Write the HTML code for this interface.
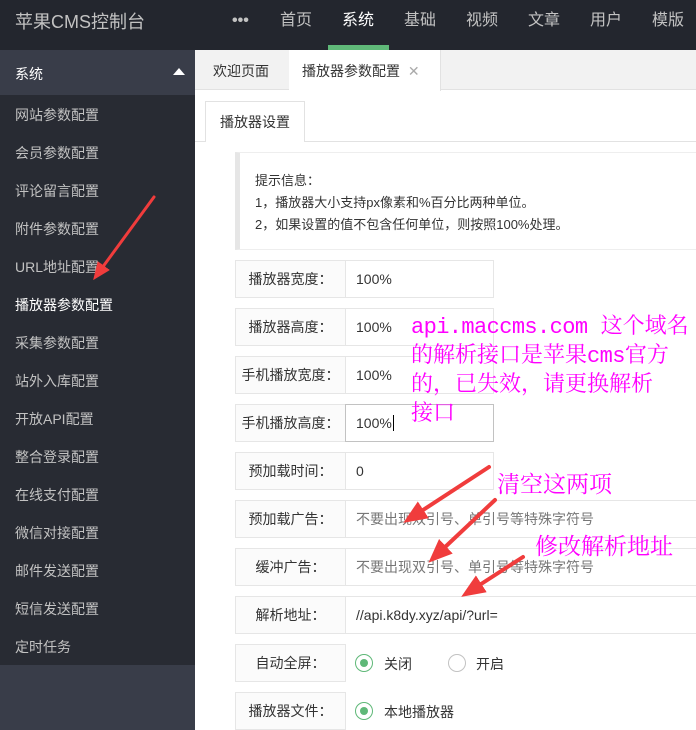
<!DOCTYPE html>
<html><head><meta charset="utf-8"><style>
*{margin:0;padding:0;box-sizing:border-box}
body{width:696px;height:730px;overflow:hidden;background:#fff;font-family:"Liberation Sans","Noto Sans CJK SC",sans-serif;position:relative;color:#333}
.hd{position:absolute;left:0;top:0;width:696px;height:50px;background:#23262e}
.logo{position:absolute;left:15px;top:0;line-height:44px;font-size:18px;color:#c2c2c2}
.nav{position:absolute;top:0;line-height:42px;font-size:16px;color:#c2c2c2}
.ul{position:absolute;left:328px;top:45px;width:61px;height:5px;background:#5fb878}
.side{position:absolute;left:0;top:50px;width:195px;height:680px;background:#393d49}
.sl{position:absolute;left:0;top:45px;width:195px;height:570px;background:#282b33}
.si{position:absolute;left:15px;font-size:14px;color:#c2c2c2}
.tabs{position:absolute;left:195px;top:50px;width:501px;height:40px;background:#f2f2f2;border-bottom:1px solid #e2e2e2}
.f{position:absolute;font-size:14px}
.lb{position:absolute;left:235px;width:111px;height:38px;border:1px solid #e6e6e6;background:#fbfbfb;font-size:14px;line-height:36px;text-align:center;color:#333}
.in{position:absolute;left:345px;height:38px;border:1px solid #e6e6e6;background:#fff;font-size:14px;line-height:36px;padding-left:10px;color:#333}
.pk{position:absolute;color:#f0f;font-family:"Liberation Mono","Noto Serif CJK SC",serif;font-size:22px;line-height:29px;white-space:nowrap}
.pk span{letter-spacing:-0.6px}
.rd{position:absolute;width:18px;height:18px;border-radius:50%;border:1px solid #5fb878}
.rd i{position:absolute;left:4px;top:4px;width:8px;height:8px;border-radius:50%;background:#5fb878}
</style></head><body>
<div class="hd"></div>
<div class="logo">苹果CMS控制台</div>
<div class="nav" style="left:232px;font-weight:bold">•••</div>
<div class="nav" style="left:280px">首页</div>
<div class="nav" style="left:342px;color:#fff">系统</div>
<div class="nav" style="left:404px">基础</div>
<div class="nav" style="left:466px">视频</div>
<div class="nav" style="left:528px">文章</div>
<div class="nav" style="left:590px">用户</div>
<div class="nav" style="left:652px">模版</div>
<div class="ul"></div>
<div class="side"><div class="sl"></div></div>
<div class="si" style="top:64px;color:#fff">系统</div>
<div style="position:absolute;left:173px;top:68px;border-left:6px solid transparent;border-right:6px solid transparent;border-bottom:7px solid #fff"></div>
<div class="si" style="top:105px">网站参数配置</div>
<div class="si" style="top:143px">会员参数配置</div>
<div class="si" style="top:181px">评论留言配置</div>
<div class="si" style="top:219px">附件参数配置</div>
<div class="si" style="top:257px">URL地址配置</div>
<div class="si" style="top:295px;color:#fff">播放器参数配置</div>
<div class="si" style="top:333px">采集参数配置</div>
<div class="si" style="top:371px">站外入库配置</div>
<div class="si" style="top:409px">开放API配置</div>
<div class="si" style="top:447px">整合登录配置</div>
<div class="si" style="top:485px">在线支付配置</div>
<div class="si" style="top:523px">微信对接配置</div>
<div class="si" style="top:561px">邮件发送配置</div>
<div class="si" style="top:599px">短信发送配置</div>
<div class="si" style="top:637px">定时任务</div>
<div class="tabs"></div>
<div class="f" style="left:213px;top:61px">欢迎页面</div>
<div style="position:absolute;left:289px;top:50px;width:152px;height:41px;background:#fff;border-right:1px solid #e2e2e2"></div>
<div class="f" style="left:302px;top:61px">播放器参数配置 <span style="color:#aaa;margin-left:4px">✕</span></div>
<div style="position:absolute;left:195px;top:141px;width:501px;height:1px;background:#e2e2e2"></div>
<div style="position:absolute;left:205px;top:101px;width:100px;height:41px;background:#fff;border:1px solid #e2e2e2;border-bottom:none"></div>
<div class="f" style="left:220px;top:112px">播放器设置</div>
<div style="position:absolute;left:235px;top:152px;width:470px;height:98px;border:1px solid #eee;border-left:5px solid #e6e6e6;background:#fff"></div>
<div class="f" style="left:255px;top:170px;font-size:13px;line-height:22px">提示信息：<br>1，播放器大小支持px像素和%百分比两种单位。<br>2，如果设置的值不包含任何单位，则按照100%处理。</div>

<div class="lb" style="top:260px">播放器宽度：</div><div class="in" style="top:260px;width:149px">100%</div>
<div class="lb" style="top:308px">播放器高度：</div><div class="in" style="top:308px;width:149px">100%</div>
<div class="lb" style="top:356px">手机播放宽度：</div><div class="in" style="top:356px;width:149px">100%</div>
<div class="lb" style="top:404px">手机播放高度：</div><div class="in" style="top:404px;width:149px;border-color:#c2c2c2">100%<span style="border-left:1px solid #000;margin-left:1px"></span></div>
<div class="lb" style="top:452px">预加载时间：</div><div class="in" style="top:452px;width:149px">0</div>
<div class="lb" style="top:500px">预加载广告：</div><div class="in" style="top:500px;width:360px;color:#777">不要出现双引号、单引号等特殊字符号</div>
<div class="lb" style="top:548px">缓冲广告：</div><div class="in" style="top:548px;width:360px;color:#777">不要出现双引号、单引号等特殊字符号</div>
<div class="lb" style="top:596px">解析地址：</div><div class="in" style="top:596px;width:360px">//api.k8dy.xyz/api/?url=</div>
<div class="lb" style="top:644px">自动全屏：</div>
<div class="rd" style="left:355px;top:654px"><i></i></div><div class="f" style="left:384px;top:654px">关闭</div>
<div class="rd" style="left:448px;top:654px;border-color:#c2c2c2"></div><div class="f" style="left:476px;top:654px">开启</div>
<div class="lb" style="top:692px">播放器文件：</div>
<div class="rd" style="left:355px;top:702px"><i></i></div><div class="f" style="left:384px;top:702px">本地播放器</div>

<div class="pk" style="left:411px;top:313px"><span>api.maccms.com</span> 这个域名<br>的解析接口是苹果<span>cms</span>官方<br>的，已失效，请更换解析<br>接口</div>
<div class="pk" style="left:497px;top:472px;font-size:23px">清空这两项</div>
<div class="pk" style="left:535px;top:534px;font-size:23px">修改解析地址</div>

<svg style="position:absolute;left:0;top:0" width="696" height="730">
<defs><marker id="a" markerWidth="6" markerHeight="5" refX="1" refY="2.5" orient="auto"><polygon points="0,0 6,2.5 0,5" fill="#f03c3c"/></marker></defs>
<g stroke="#f03c3c" stroke-width="4" marker-end="url(#a)" stroke-linecap="round">
<line x1="154" y1="197" x2="102" y2="268" stroke-width="3"/>
<line x1="489" y1="467" x2="420" y2="512"/>
<line x1="495" y1="500" x2="443" y2="549"/>
<line x1="523" y1="557" x2="478" y2="586"/>
</g></svg>
</body></html>
